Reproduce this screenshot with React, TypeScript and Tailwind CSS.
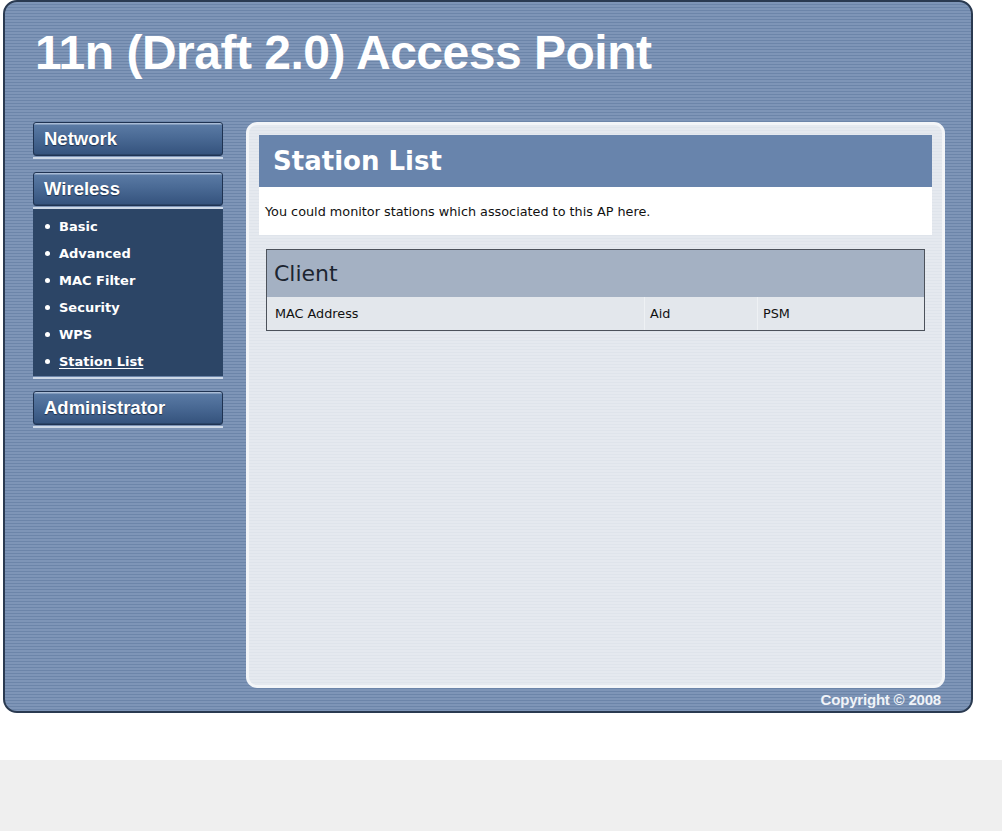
import React from "react";

const NavButton = ({ label }: { label: string }) => (
  <div className="flex flex-col">
    <div className="h-[34px] rounded-[3px] border border-[#1f3352] bg-[linear-gradient(180deg,#a9bcd6_0px,#a9bcd6_1px,#5a7aa4_2px,#4a6a95_45%,#34527c_100%)] flex items-center pl-[10px] shadow-[inset_0_-1px_0_#2a4468]">
      <span className="text-white font-bold text-[18.5px] leading-none [font-family:'Liberation_Sans',Arial,sans-serif] [text-shadow:0_1px_1px_#1d2f4a]">
        {label}
      </span>
    </div>
    <div className="mt-[1px] h-[2px] bg-[#cdd8e7]" />
  </div>
);

const subItems = ["Basic", "Advanced", "MAC Filter", "Security", "WPS", "Station List"];

export default function App() {
  return (
    <div className="w-[1002px] h-[831px] bg-white flex flex-col">
      <div className="ml-[3px] w-[970px] h-[713px] rounded-[14px] border-2 border-[#2a3a51] bg-[image:repeating-linear-gradient(180deg,#7e95b7_0px,#7e95b7_2px,#6c85a9_2px,#6c85a9_3px)] flex flex-col">
        <h1 className="pt-[27px] pl-[30px] h-[76px] text-white font-bold text-[48px] leading-[48px] tracking-[-0.5px] [font-family:'Liberation_Sans',Arial,sans-serif]">
          11n (Draft 2.0) Access Point
        </h1>
        <div className="mt-[44px] flex h-[566px]">
          <nav className="ml-[28px] w-[190px] flex flex-col">
            <NavButton label="Network" />
            <div className="mt-[13px]">
              <NavButton label="Wireless" />
            </div>
            <div className="bg-[#2c4566] pt-[4px] pb-[1px] flex flex-col">
              {subItems.map((s) => (
                <div key={s} className="h-[27px] flex items-center pl-[12px]">
                  <span className="w-[5px] h-[5px] rounded-full bg-white" />
                  <span
                    className={`ml-[9px] text-white font-bold text-[13px] leading-none [font-family:'DejaVu_Sans',Verdana,sans-serif] ${
                      s === "Station List" ? "underline underline-offset-2" : ""
                    }`}
                  >
                    {s}
                  </span>
                </div>
              ))}
            </div>
            <div className="mt-[1px] h-[2px] bg-[#cdd8e7]" />
            <div className="mt-[12px]">
              <NavButton label="Administrator" />
            </div>
          </nav>
          <main className="ml-[23px] w-[699px] h-[566px] rounded-[11px] border-[3px] border-[#f3f5f8] bg-[image:repeating-linear-gradient(180deg,#e5e9ef_0px,#e5e9ef_2px,#dfe4eb_2px,#dfe4eb_3px)] p-[10px] flex flex-col">
            <div className="h-[52px] bg-[#6884ac] flex items-center pl-[14px]">
              <span className="text-white font-bold text-[26px] leading-none [font-family:'DejaVu_Sans',Verdana,sans-serif]">
                Station List
              </span>
            </div>
            <div className="h-[48px] bg-white pl-[6px] pt-[11px]">
              <span className="text-[12.8px] leading-none text-[#111] [font-family:'DejaVu_Sans',Tahoma,sans-serif]">
                You could monitor stations which associated to this AP here.
              </span>
            </div>
            <div className="mt-[14px] mx-[7px] border border-[#4c525b] flex flex-col">
              <div className="h-[47px] bg-[#a4b1c3] flex items-center pl-[7px]">
                <span className="text-[22px] leading-none text-[#1c2530] [font-family:'DejaVu_Sans',Tahoma,sans-serif]">
                  Client
                </span>
              </div>
              <div className="h-[33px] bg-[#e3e7ec] grid grid-cols-[378px_113px_1fr] text-[12.8px] text-[#111] [font-family:'DejaVu_Sans',Tahoma,sans-serif]">
                <div className="flex items-center pl-[8px] border-r border-[#eef1f4]">MAC Address</div>
                <div className="flex items-center pl-[5px] border-r border-[#eef1f4]">Aid</div>
                <div className="flex items-center pl-[5px]">PSM</div>
              </div>
            </div>
          </main>
        </div>
        <footer className="h-[23px] flex items-center justify-end pr-[30px]">
          <span className="text-[#f0f3f8] font-bold text-[15px] leading-none tracking-[-0.2px] [font-family:'Liberation_Sans',Arial,sans-serif]">
            Copyright © 2008
          </span>
        </footer>
      </div>
      <div className="mt-[47px] h-[71px] bg-[#efefef]" />
    </div>
  );
}
